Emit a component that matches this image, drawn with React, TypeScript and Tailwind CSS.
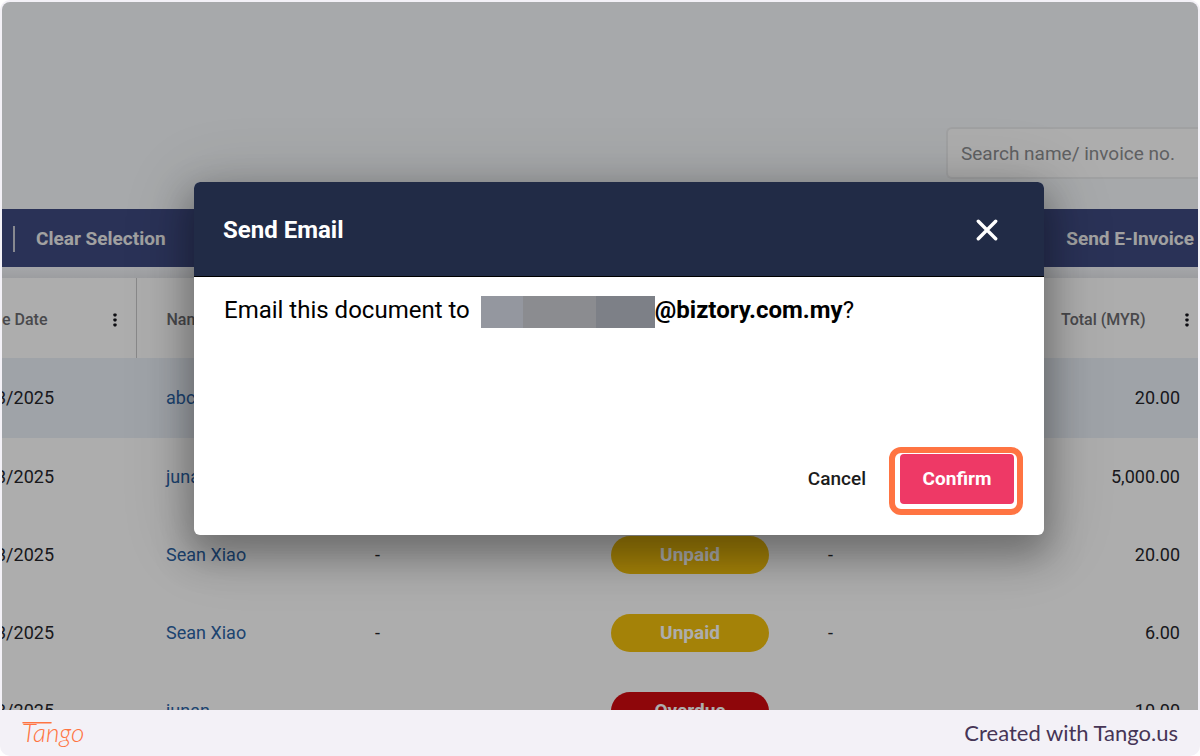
import React from 'react';

type Row = { date: string; name: string; status: 'Unpaid' | 'Overdue'; total: string; selected?: boolean };

const rows: Row[] = [
  { date: '3/2025', name: 'abc', status: 'Unpaid', total: '20.00', selected: true },
  { date: '3/2025', name: 'junan', status: 'Unpaid', total: '5,000.00' },
  { date: '3/2025', name: 'Sean Xiao', status: 'Unpaid', total: '20.00' },
  { date: '3/2025', name: 'Sean Xiao', status: 'Unpaid', total: '6.00' },
  { date: '3/2025', name: 'junan', status: 'Overdue', total: '10.00' },
];

function Dots() {
  return (
    <svg width="4" height="14" viewBox="0 0 4 14" fill="#16161c" aria-hidden="true">
      <rect x="0.4" y="0.4" width="3.2" height="3" rx="0.8" />
      <rect x="0.4" y="5.4" width="3.2" height="3" rx="0.8" />
      <rect x="0.4" y="10.4" width="3.2" height="3" rx="0.8" />
    </svg>
  );
}

function InvoicePage() {
  return (
    <div className="flex flex-col">
      <div className="flex h-[207px] flex-col items-end bg-[#f7f9fc] pt-[125px]">
        <input
          type="text"
          aria-label="Search invoices"
          placeholder="Search name/ invoice no."
          className="h-[52px] w-[252px] rounded-l-md border-2 border-r-0 border-[#ecedef] bg-white pl-[13px] text-[19px] text-[#555] placeholder:text-[#8d8e91]"
        />
      </div>
      <div className="flex h-[58px] items-center justify-between bg-[#3f4b80] pl-[11px] pr-1 pt-[2px] text-[19px] font-bold text-[#eeeeee]">
        <div className="flex items-center gap-[21px]">
          <span className="h-[26px] w-[2px] bg-[#c8cad4]" />
          <button type="button">Clear Selection</button>
        </div>
        <button type="button">Send E-Invoice</button>
      </div>
      <div className="h-[11px] bg-linear-to-b from-[#f4f6fa] to-[#e6e8ec]" />
      <table className="w-full table-fixed border-collapse bg-white text-left text-[18px] text-[#26262c]">
        <colgroup>
          <col className="w-[134px]" />
          <col className="w-[211px]" />
          <col className="w-[235px]" />
          <col className="w-[217px]" />
          <col className="w-[231px]" />
          <col />
        </colgroup>
        <thead>
          <tr className="h-20 text-[16px] text-[#6c6c70]">
            <th className="border-r border-[#cacacc] p-0 pt-1 font-medium">
              <div className="flex items-center justify-between pr-[19px]">
                <span>e Date</span>
                <button type="button" aria-label="Date column menu"><Dots /></button>
              </div>
            </th>
            <th className="p-0 pl-[30px] pt-1 font-medium">Name</th>
            <th className="p-0" />
            <th className="p-0" />
            <th className="p-0" />
            <th className="p-0 pt-1 font-medium">
              <div className="flex items-center justify-between pl-[31px] pr-[9px]">
                <span className="whitespace-nowrap">Total (MYR)</span>
                <button type="button" aria-label="Total column menu"><Dots /></button>
              </div>
            </th>
          </tr>
        </thead>
        <tbody>
          {rows.map((r, i) => (
            <tr key={i} className={r.selected ? 'h-20 bg-[#ebf1f8]' : 'h-[78px]'}>
              <td className="p-0 pb-[2px]">
                <div className="flex w-[52px] justify-end overflow-hidden">{r.date}</div>
              </td>
              <td className="p-0 pb-[2px] pl-[30px]">
                <a href="#" className="text-[#2b64a6]">{r.name}</a>
              </td>
              <td className="p-0 pb-[2px] pl-[28px]">-</td>
              <td className="p-0 pl-[29px]">
                <div
                  className={
                    r.status === 'Unpaid'
                      ? 'flex h-[38px] w-[158px] items-center justify-center rounded-full bg-[#f2c00d] text-[19px] font-bold text-white'
                      : 'flex h-[38px] w-[158px] items-center justify-center rounded-full bg-[#d10a0f] text-[19px] font-bold text-white'
                  }
                >
                  {r.status}
                </div>
              </td>
              <td className="p-0 pb-[2px] pl-[29px]">-</td>
              <td className="p-0 pb-[2px] pr-[18px] text-right">{r.total}</td>
            </tr>
          ))}
        </tbody>
      </table>
    </div>
  );
}

function SendEmailDialog() {
  return (
    <div
      role="dialog"
      aria-labelledby="dialog-title"
      className="w-[850px] overflow-hidden rounded-md bg-white shadow-[0_16px_36px_6px_rgba(0,0,0,0.3),0_6px_70px_8px_rgba(0,0,0,0.12)]"
    >
      <div className="flex h-[95px] items-center justify-between border-b border-black bg-[#212b46] pl-[29px] pr-[46px] pt-[2px]">
        <h2 id="dialog-title" className="text-[24px] font-bold text-white">Send Email</h2>
        <button type="button" aria-label="Close" className="text-white">
          <svg width="22" height="22" viewBox="0 0 22 22" fill="none" stroke="currentColor" strokeWidth="3.4" strokeLinecap="round" aria-hidden="true">
            <path d="M2.3 2.3 19.7 19.7M19.7 2.3 2.3 19.7" />
          </svg>
        </button>
      </div>
      <div className="flex items-start px-[30px] pt-[17px] text-[24px] leading-8 text-black">
        <span>Email this document to</span>
        <span className="ml-[11px] mt-[2px] flex h-8 w-[174px]">
          <span className="w-[42px] bg-[#94979f]" />
          <span className="w-[73px] bg-[#8b8c90]" />
          <span className="flex-1 bg-[#7d8087]" />
        </span>
        <strong className="font-bold">@biztory.com.my</strong>
        <span>?</span>
      </div>
      <div className="flex items-center justify-end gap-[34px] pb-[31px] pr-[30px] pt-[126px] text-[19px]">
        <button type="button" className="font-medium text-[#1c1c1c]">Cancel</button>
        <div className="relative">
          <button type="button" className="h-[50px] w-[114px] rounded bg-[#ee3966] font-bold text-white">Confirm</button>
          <span className="pointer-events-none absolute -bottom-[11px] -left-[11px] -right-[9px] -top-[7px] rounded-xl border-6 border-[#ff7442]" />
        </div>
      </div>
    </div>
  );
}

export default function App() {
  return (
    <main className="flex h-screen flex-col overflow-hidden rounded-[10px] bg-[#f3f1f7] px-[2px] pt-[2px] font-['Roboto',sans-serif]">
      <div className="relative min-h-0 flex-1 overflow-hidden rounded-t-lg">
        <InvoicePage />
        <div className="absolute inset-0 flex items-start justify-center bg-black/32 pl-[38px] pt-[180px]">
          <SendEmailDialog />
        </div>
      </div>
      <footer className="flex h-[46px] shrink-0 items-center justify-between px-5 pb-[2px] font-['Lato',sans-serif]">
        <a href="#" className="relative text-[26px] leading-8 font-light italic text-[#ff7442]">
          Tango
          <svg className="absolute left-0 top-0 overflow-visible" width="66" height="32" viewBox="0 0 66 32" fill="none" stroke="currentColor" strokeWidth="1.5" strokeLinecap="round" aria-hidden="true">
            <path d="M1 6.8H29" />
          </svg>
        </a>
        <span className="text-[22px] text-[#463556]">Created with Tango.us</span>
      </footer>
    </main>
  );
}
